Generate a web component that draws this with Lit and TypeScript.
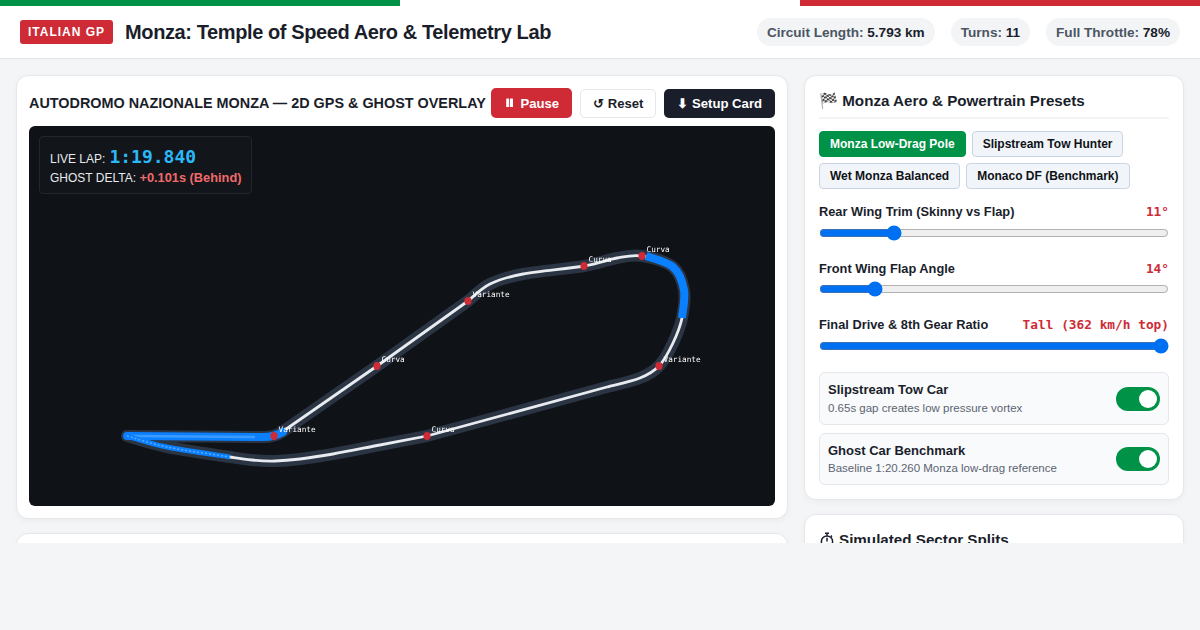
import { LitElement, html, css, svg } from "lit";
import { customElement } from "lit/decorators.js";

type P = [number, number];

function smooth(pts: P[]): string {
  const n = pts.length;
  const at = (i: number): P => pts[Math.max(0, Math.min(n - 1, i))];
  let d = `M${pts[0][0]} ${pts[0][1]}`;
  for (let i = 0; i < n - 1; i++) {
    const p0 = at(i - 1), p1 = at(i), p2 = at(i + 1), p3 = at(i + 2);
    const c1x = p1[0] + (p2[0] - p0[0]) / 6, c1y = p1[1] + (p2[1] - p0[1]) / 6;
    const c2x = p2[0] - (p3[0] - p1[0]) / 6, c2y = p2[1] - (p3[1] - p1[1]) / 6;
    d += ` C${c1x.toFixed(1)} ${c1y.toFixed(1)} ${c2x.toFixed(1)} ${c2y.toFixed(1)} ${p2[0]} ${p2[1]}`;
  }
  return d;
}

const TRACK =
  "M127 436 L263 437 C268 437 276 436 282 432 L377 366 L468 301 " +
  smooth([[468, 301], [490, 284], [523, 274], [584, 266], [617, 258], [642, 256], [673, 267], [684, 290], [682, 318], [673, 343], [659, 366], [640, 378], [607, 387]]).replace(/^M\S+ \S+ /, "") +
  " L427 436 " +
  smooth([[427, 436], [380, 445], [333, 454], [300, 459], [275, 461], [252, 460], [230, 457], [167, 447], [127, 436]]).replace(/^M\S+ \S+ /, "") +
  " Z";

const TOP_BLUE = smooth([[646, 256], [673, 267], [684, 290], [682, 318]]);
const TAIL = smooth([[127, 436], [167, 447], [230, 457]]);

const CORNERS = [
  { x: 274, y: 436, n: "Variante" },
  { x: 377, y: 366, n: "Curva" },
  { x: 468, y: 301, n: "Variante" },
  { x: 584, y: 266, n: "Curva" },
  { x: 642, y: 256, n: "Curva" },
  { x: 659, y: 366, n: "Variante" },
  { x: 427, y: 436, n: "Curva" },
];

@customElement("app-root")
export class AppRoot extends LitElement {
  static styles = css`
    :host { display: block; height: 630px; background: #f4f5f7; font-family: "Liberation Sans", Arial, sans-serif; color: #1a1e2b; overflow: hidden; }
    * { box-sizing: border-box; }
    .stripe { display: grid; grid-template-columns: 400px 400px 400px; height: 6px; }
    .g { background: #009246; } .w { background: #fff; } .r { background: #ce2b37; }
    header { height: 53px; background: #fff; border-bottom: 1px solid #e2e5ea; display: flex; align-items: center; padding: 0 20px; gap: 12px; }
    .badge { background: #ce2b37; color: #fff; font-size: 12px; font-weight: 700; letter-spacing: 1px; padding: 5px 8px; border-radius: 3px; line-height: 14px; }
    h1 { font-size: 20px; font-weight: 700; letter-spacing: -0.4px; margin: 0; line-height: 26px; }
    .stats { margin-left: auto; display: flex; gap: 16px; }
    .stat { background: #f3f4f6; border-radius: 14px; height: 28px; padding: 0 10px; font-size: 13.6px; font-weight: 700; color: #4b5563; display: flex; align-items: center; gap: 3.7px; }
    .stat b { color: #1a1e2b; }
    main { height: 484px; overflow: hidden; padding: 16px; display: grid; grid-template-columns: 1fr 380px; gap: 16px; align-items: start; }
    .col { display: flex; flex-direction: column; gap: 14px; }
    .card { background: #fff; border: 1px solid #e5e7eb; border-radius: 12px; box-shadow: 0 2px 6px rgba(0,0,0,0.04); }
    .left { padding: 12px; }
    .head { display: flex; align-items: center; justify-content: space-between; height: 30px; margin-bottom: 8px; }
    .head h2 { margin: 0; font-size: 14.4px; font-weight: 700; white-space: nowrap; }
    .btns { display: flex; gap: 8px; align-items: flex-end; }
    button.b { height: 29px; border-radius: 5px; border: 1px solid transparent; font: 700 13.12px "Liberation Sans", sans-serif; padding: 0 12px; white-space: nowrap; }
    button.pause { background: #ce2b37; color: #fff; height: 30px; padding: 0 12px; display: flex; align-items: center; gap: 4px; }
    .pause svg { display: block; flex: none; }
    .reset { background: #fff; color: #1a1e2b; border-color: #e5e7eb !important; }
    .setup { background: #1a1e2b; color: #fff; }
    .canvas { position: relative; height: 380px; background: #0f1216; border-radius: 6px; overflow: hidden; }
    .canvas > svg { display: block; filter: blur(0.3px); }
    .hud { position: absolute; left: 10px; top: 10px; width: 213px; height: 58px; background: #12151a; border: 1px solid #22272f; border-radius: 4px; padding: 9px 10px; color: #e8eaed; font-size: 12px; line-height: 1; white-space: nowrap; }
    .hud .l1 { display: flex; align-items: baseline; gap: 4px; height: 22px; }
    .hud .l2 { margin-top: 2px; height: 16px; display: flex; align-items: center; gap: 3.4px; }
    .lap { font: 700 18px "DejaVu Sans Mono", monospace; color: #2bb8f8; }
    .delta { color: #f06a6a; font-weight: 700; font-size: 12.8px; }
    .lab { font: 7.7px "DejaVu Sans Mono", monospace; fill: #fff; }
    .stub { height: 60px; }
    .right { padding: 14px; height: 425px; }
    .right h3 { margin: 0 0 12px; font-size: 15.2px; font-weight: 700; height: 29px; border-bottom: 2px solid #f3f4f6; line-height: 20px; padding-top: 1px; }
    .chips { display: flex; flex-wrap: wrap; gap: 6px; margin-bottom: 15px; }
    .chip { height: 26px; border: 1px solid #cbd5e1; background: #f1f5f9; color: #0f1216; font: 700 12px "Liberation Sans", sans-serif; padding: 0 10px; border-radius: 4px; }
    .chip.on { background: #009246; border-color: #009246; color: #fff; }
    .ctl { margin-bottom: 14px; height: 43px; }
    .ctl.mid { margin-bottom: 13px; }
    .ctl.mid input { margin-top: 5px; }
    .ctl.end { margin-bottom: 12px; }
    .ctl .row { display: flex; justify-content: space-between; align-items: center; font-size: 12.8px; font-weight: 700; height: 14px; }
    .val { font: 700 12.8px "DejaVu Sans Mono", monospace; color: #ce2b37; }
    input[type=range] { display: block; width: 350px; margin: 6px 0 0; padding: 0; accent-color: #0070f3; height: 18px; }
    .tog { display: flex; align-items: center; justify-content: space-between; border: 1px solid #e5e7eb; border-radius: 6px; background: #f9fafb; padding: 0 8px; margin-bottom: 8px; height: 53px; }
    .tog.second { height: 52px; margin-bottom: 0; }
    .tog .t { font-size: 13px; font-weight: 700; line-height: 16px; }
    .tog .s { font-size: 11.5px; color: #5b6472; line-height: 14px; margin-top: 3px; }
    .tog.second .s { margin-top: 2px; }
    .sw { width: 44px; height: 24px; border-radius: 12px; background: #009246; display: flex; justify-content: flex-end; align-items: center; padding: 0 3px; flex: none; }
    .sw i { display: block; width: 18px; height: 18px; border-radius: 50%; background: #fff; }
    .card2 { padding: 14px; height: 100px; }
    .card2 h3 { margin: 0; font-size: 15.2px; font-weight: 700; line-height: 20px; padding-top: 1px; display: flex; align-items: center; gap: 4px; }
    .card2 h3 svg { display: block; flex: none; }
  `;

  private toggle(t: string, s: string, cls = "") {
    return html`<div class="tog ${cls}"><div><div class="t">${t}</div><div class="s">${s}</div></div><div class="sw"><i></i></div></div>`;
  }
  private ctl(l: string, v: string, min: number, max: number, val: number, cls = "") {
    return html`<div class="ctl ${cls}"><div class="row"><span>${l}</span><span class="val">${v}</span></div>
      <input type="range" min=${min} max=${max} step="any" .value=${String(val)} /></div>`;
  }

  render() {
    return html`
      <div class="stripe"><div class="g"></div><div class="w"></div><div class="r"></div></div>
      <header>
        <span class="badge">ITALIAN GP</span>
        <h1>Monza: Temple of Speed Aero &amp; Telemetry Lab</h1>
        <div class="stats">
          <div class="stat">Circuit Length: <b>5.793 km</b></div>
          <div class="stat">Turns: <b>11</b></div>
          <div class="stat">Full Throttle: <b>78%</b></div>
        </div>
      </header>
      <main>
        <div class="col">
          <section class="card left">
            <div class="head">
              <h2>AUTODROMO NAZIONALE MONZA — 2D GPS &amp; GHOST OVERLAY</h2>
              <div class="btns">
                <button class="b pause">
                  <svg width="12" height="12" viewBox="0 0 12 12" fill="#fff"><rect x="2.2" y="1.5" width="3" height="8.6" rx="0.4" /><rect x="6" y="1.5" width="3" height="8.6" rx="0.4" /></svg>
                  <span>Pause</span>
                </button>
                <button class="b reset">↺ Reset</button>
                <button class="b setup">⬇ Setup Card</button>
              </div>
            </div>
            <div class="canvas">
              <svg width="746" height="380" viewBox="29 126 746 380" fill="none">
                <path d=${TRACK} stroke="#2a3442" stroke-width="12" stroke-linejoin="round" />
                <path d=${TRACK} stroke="#e8ecf0" stroke-width="2.8" stroke-linejoin="round" />
                <path d="M127 436 L263 437 C268 437 276 436 283 432" stroke="#0a80ff" stroke-width="8" stroke-linecap="round" />
                <path d="M129 436 L255 437" stroke="#3d9bff" stroke-width="2.5" />
                <path d=${TAIL} stroke="#0a80ff" stroke-width="5" />
                <path d=${TAIL} stroke="#5aa9ff" stroke-width="1.5" stroke-dasharray="2 2" />
                <path d=${TOP_BLUE} stroke="#0a80ff" stroke-width="8" />
                ${CORNERS.map(
                  (c) => svg`<ellipse cx=${c.x} cy=${c.y} rx="3.6" ry="4.1" fill="#ce2b37" /><text class="lab" x=${c.x + 4.5} y=${c.y - 4}>${c.n}</text>`
                )}
              </svg>
              <div class="hud">
                <div class="l1"><span>LIVE LAP:</span><span class="lap">1:19.840</span></div>
                <div class="l2"><span>GHOST DELTA:</span><span class="delta">+0.101s (Behind)</span></div>
              </div>
            </div>
          </section>
          <section class="card stub"></section>
        </div>
        <div class="col">
          <section class="card right">
            <h3>🏁 Monza Aero &amp; Powertrain Presets</h3>
            <div class="chips">
              <button class="chip on">Monza Low-Drag Pole</button>
              <button class="chip">Slipstream Tow Hunter</button>
              <button class="chip">Wet Monza Balanced</button>
              <button class="chip">Monaco DF (Benchmark)</button>
            </div>
            ${this.ctl("Rear Wing Trim (Skinny vs Flap)", "11°", 5, 35, 11)}
            ${this.ctl("Front Wing Flap Angle", "14°", 0, 100, 14.4, "mid")}
            ${this.ctl("Final Drive & 8th Gear Ratio", "Tall (362 km/h top)", 0, 100, 100, "end")}
            ${this.toggle("Slipstream Tow Car", "0.65s gap creates low pressure vortex")}
            ${this.toggle("Ghost Car Benchmark", "Baseline 1:20.260 Monza low-drag reference", "second")}
          </section>
          <section class="card card2">
            <h3>
              <svg width="16" height="18" viewBox="0 0 16 18" fill="none" stroke="#1a1e2b" stroke-width="1.5"><circle cx="8" cy="10.5" r="5.6" /><path d="M6 2.2h4M8 2.2v2.6M8 10.5V6.8M13 4.6l-1.2 1.2" /></svg>
              <span>Simulated Sector Splits</span>
            </h3>
          </section>
        </div>
      </main>
    `;
  }
}
